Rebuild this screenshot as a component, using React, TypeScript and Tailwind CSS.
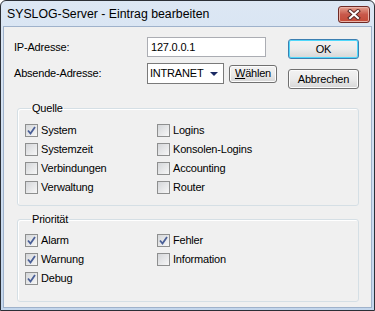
import React from "react";

const font = { fontFamily: '"Liberation Sans", Arial, sans-serif' };

const CheckMark = () => (
  <svg width="9" height="9" viewBox="0 0 9 9" className="block">
    <path d="M1 4.5 L3.5 7.5 L8 1" fill="none" stroke="#4a5f97" strokeWidth="1.8" />
  </svg>
);

const Checkbox: React.FC<{ label: string; checked?: boolean }> = ({ label, checked }) => (
  <div className="flex items-center h-[19px]">
    <div className="w-[13px] h-[13px] border border-[#8e8f8f] bg-gradient-to-br from-[#d4d6d9] to-[#f7f7f7] flex items-center justify-center">
      {checked && <CheckMark />}
    </div>
    <span className="ml-[3px] text-[11px] leading-[13px] tracking-[-0.2px] text-black">{label}</span>
  </div>
);

const Button: React.FC<{ children: React.ReactNode; className?: string; def?: boolean }> = ({
  children,
  className = "",
  def,
}) => (
  <div
    className={
      "flex items-center justify-center rounded-[3px] border bg-gradient-to-b from-[#f2f2f2] via-[#ebebeb] to-[#d6d6d6] text-[11px] tracking-[-0.2px] text-black " +
      (def
        ? "border-[#3c7fb1] shadow-[inset_0_0_0_1px_#4fd8fb]"
        : "border-[#707070] shadow-[inset_0_0_0_1px_#fcfcfc]") +
      " " +
      className
    }
  >
    {children}
  </div>
);

const Group: React.FC<{ title: string; className?: string; children: React.ReactNode }> = ({
  title,
  className = "",
  children,
}) => (
  <fieldset
    className={
      "mx-[13px] mr-[12px] border border-[#d5dfe5] rounded-[3px] shadow-[inset_1px_1px_0_#fff] pl-[7px] " +
      className
    }
  >
    <legend className="ml-[6px] px-[1px] text-[11px] tracking-[-0.2px] leading-[13px] text-black">
      {title}
    </legend>
    {children}
  </fieldset>
);

export default function App() {
  return (
    <div style={font} className="w-[375px] h-[311px] bg-white">
      <div className="w-[375px] h-[311px] flex flex-col border border-[#2b2f36] rounded-t-[6px] bg-gradient-to-b from-[#dce7f4] to-[#c3d6ec] overflow-hidden">
        {/* title bar */}
        <div className="h-[25px] flex items-center pl-[6px] pr-[4px] shrink-0">
          <span className="text-[12.3px] text-black mt-[2px]">SYSLOG-Server - Eintrag bearbeiten</span>
          <div className="ml-auto mt-[2px] w-[32px] h-[17px] rounded-[3px] border border-[#6e2a26] bg-gradient-to-b from-[#e4a091] via-[#c8584a] to-[#c54a36] shadow-[inset_0_0_0_1px_#e9b3a8] flex items-center justify-center">
            <svg width="14" height="11" viewBox="0 0 14 11">
              <path d="M3 2 L11 9 M11 2 L3 9" stroke="#5a2a28" strokeWidth="4" strokeLinecap="square" />
              <path d="M3 2 L11 9 M11 2 L3 9" stroke="#ffffff" strokeWidth="2" strokeLinecap="square" />
            </svg>
          </div>
        </div>
        {/* client */}
        <div className="flex-1 mx-[2px] mb-[2px] border border-[#9fb2cb] bg-[#f0f0f0] flex flex-col">
          <div className="flex pl-[10px] pt-[10px]">
            <div className="flex flex-col gap-[6px]">
              <div className="flex items-center">
                <span className="w-[133px] text-[11px] tracking-[-0.2px]">IP-Adresse:</span>
                <div className="w-[119px] h-[20px] border border-[#abadb3] bg-white flex items-center pl-[3px] text-[11px] tracking-[-0.2px]">
                  127.0.0.1
                </div>
              </div>
              <div className="flex items-center">
                <span className="w-[133px] text-[11px] tracking-[-0.2px]">Absende-Adresse:</span>
                <div className="w-[77px] h-[21px] border border-[#7a7a7a] bg-white flex items-center pl-[2px] pr-[5px] text-[11px] tracking-[-0.2px]">
                  <span>INTRANET</span>
                  <svg width="8" height="4" viewBox="0 0 8 4" className="ml-auto">
                    <path d="M0 0 H8 L4 4 Z" fill="#1b2a63" />
                  </svg>
                </div>
                <Button className="ml-[5px] w-[48px] h-[18px]">
                  <span>
                    <span className="underline">W</span>ählen
                  </span>
                </Button>
              </div>
            </div>
            <div className="ml-auto mr-[12px] mt-[2px] flex flex-col gap-[10px]">
              <Button def className="w-[71px] h-[20px]">
                OK
              </Button>
              <Button className="w-[71px] h-[20px]">Abbrechen</Button>
            </div>
          </div>

          <Group title="Quelle" className="mt-[13px] h-[104px]">
            <div className="grid grid-cols-[132px_1fr] mt-[6px]">
              <Checkbox label="System" checked />
              <Checkbox label="Logins" />
              <Checkbox label="Systemzeit" />
              <Checkbox label="Konsolen-Logins" />
              <Checkbox label="Verbindungen" />
              <Checkbox label="Accounting" />
              <Checkbox label="Verwaltung" />
              <Checkbox label="Router" />
            </div>
          </Group>

          <Group title="Priorität" className="mt-[7px] h-[89px]">
            <div className="grid grid-cols-[132px_1fr] mt-[5px]">
              <Checkbox label="Alarm" checked />
              <Checkbox label="Fehler" checked />
              <Checkbox label="Warnung" checked />
              <Checkbox label="Information" />
              <Checkbox label="Debug" checked />
            </div>
          </Group>
        </div>
      </div>
    </div>
  );
}
